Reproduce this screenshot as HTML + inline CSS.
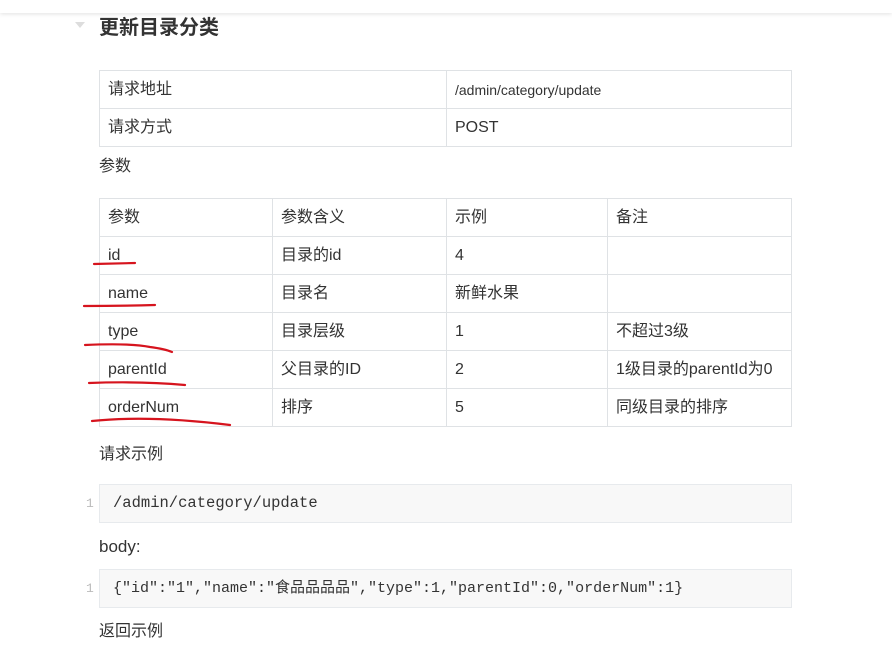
<!DOCTYPE html>
<html><head><meta charset="utf-8"><style>
*{margin:0;padding:0;box-sizing:border-box}
body{width:892px;height:652px;overflow:hidden;background:#fff;font-family:"Liberation Sans","Noto Sans CJK SC",sans-serif;color:#333;font-size:16px;position:relative}
.top{position:absolute;left:0;top:0;width:892px;height:13px;background:#fff;box-shadow:0 1px 4px rgba(0,0,0,.12)}
.a{position:absolute;line-height:20px}
table{position:absolute;border-collapse:collapse;left:99px;table-layout:fixed}
td{border:1px solid #dfe2e5;padding:2px 8px 0;height:38px;line-height:34px;font-size:16px;vertical-align:top;white-space:nowrap;overflow:visible}
.code{position:absolute;left:99px;width:693px;height:39px;background:#f8f8f8;border:1px solid #e7eaed;font-family:"Liberation Mono","Noto Sans CJK SC",monospace;font-size:15.5px;line-height:37px;padding-left:13px;color:#333}
.ln{position:absolute;left:86px;font-family:"Liberation Mono",monospace;font-size:13px;color:#bbb;line-height:20px}
</style></head><body>
<div class="top"></div>
<div class="a" style="left:75px;top:22px;width:0;height:0;border-left:5px solid transparent;border-right:5px solid transparent;border-top:6px solid #ddd"></div>
<div class="a" style="left:99px;top:18px;font-size:20px;font-weight:bold;color:#333">更新目录分类</div>
<table style="top:70px;width:693px">
<colgroup><col style="width:347px"><col></colgroup>
<tr><td>请求地址</td><td style="font-size:14px">/admin/category/update</td></tr>
<tr><td>请求方式</td><td>POST</td></tr>
</table>
<div class="a" style="left:99px;top:157px">参数</div>
<table style="top:198px;width:693px">
<colgroup><col style="width:173px"><col style="width:174px"><col style="width:161px"><col></colgroup>
<tr><td>参数</td><td>参数含义</td><td>示例</td><td>备注</td></tr>
<tr><td>id</td><td>目录的id</td><td>4</td><td></td></tr>
<tr><td>name</td><td>目录名</td><td>新鲜水果</td><td></td></tr>
<tr><td>type</td><td>目录层级</td><td>1</td><td>不超过3级</td></tr>
<tr><td>parentId</td><td>父目录的ID</td><td>2</td><td style="padding-right:0">1级目录的parentId为0</td></tr>
<tr><td>orderNum</td><td>排序</td><td>5</td><td>同级目录的排序</td></tr>
</table>
<svg class="a" style="left:0;top:0" width="892" height="652"><g stroke="#d6141e" stroke-width="2.2" fill="none" stroke-linecap="round">
<path d="M94 264 L135 263"/>
<path d="M84 306 Q120 306 155 305"/>
<path d="M85 345 Q130 343 150 347 Q165 349 172 352"/>
<path d="M89 383 Q140 381 185 385"/>
<path d="M92 421 Q150 415 230 425"/>
</g></svg>
<div class="a" style="left:99px;top:445px">请求示例</div>
<div class="ln" style="top:494px">1</div>
<div class="code" style="top:484px">/admin/category/update</div>
<div class="a" style="left:99px;top:537px;font-size:17px">body:</div>
<div class="ln" style="top:579px">1</div>
<div class="code" style="top:569px;font-size:15px">{"id":"1","name":"食品品品品","type":1,"parentId":0,"orderNum":1}</div>
<div class="a" style="left:99px;top:622px">返回示例</div>
</body></html>
